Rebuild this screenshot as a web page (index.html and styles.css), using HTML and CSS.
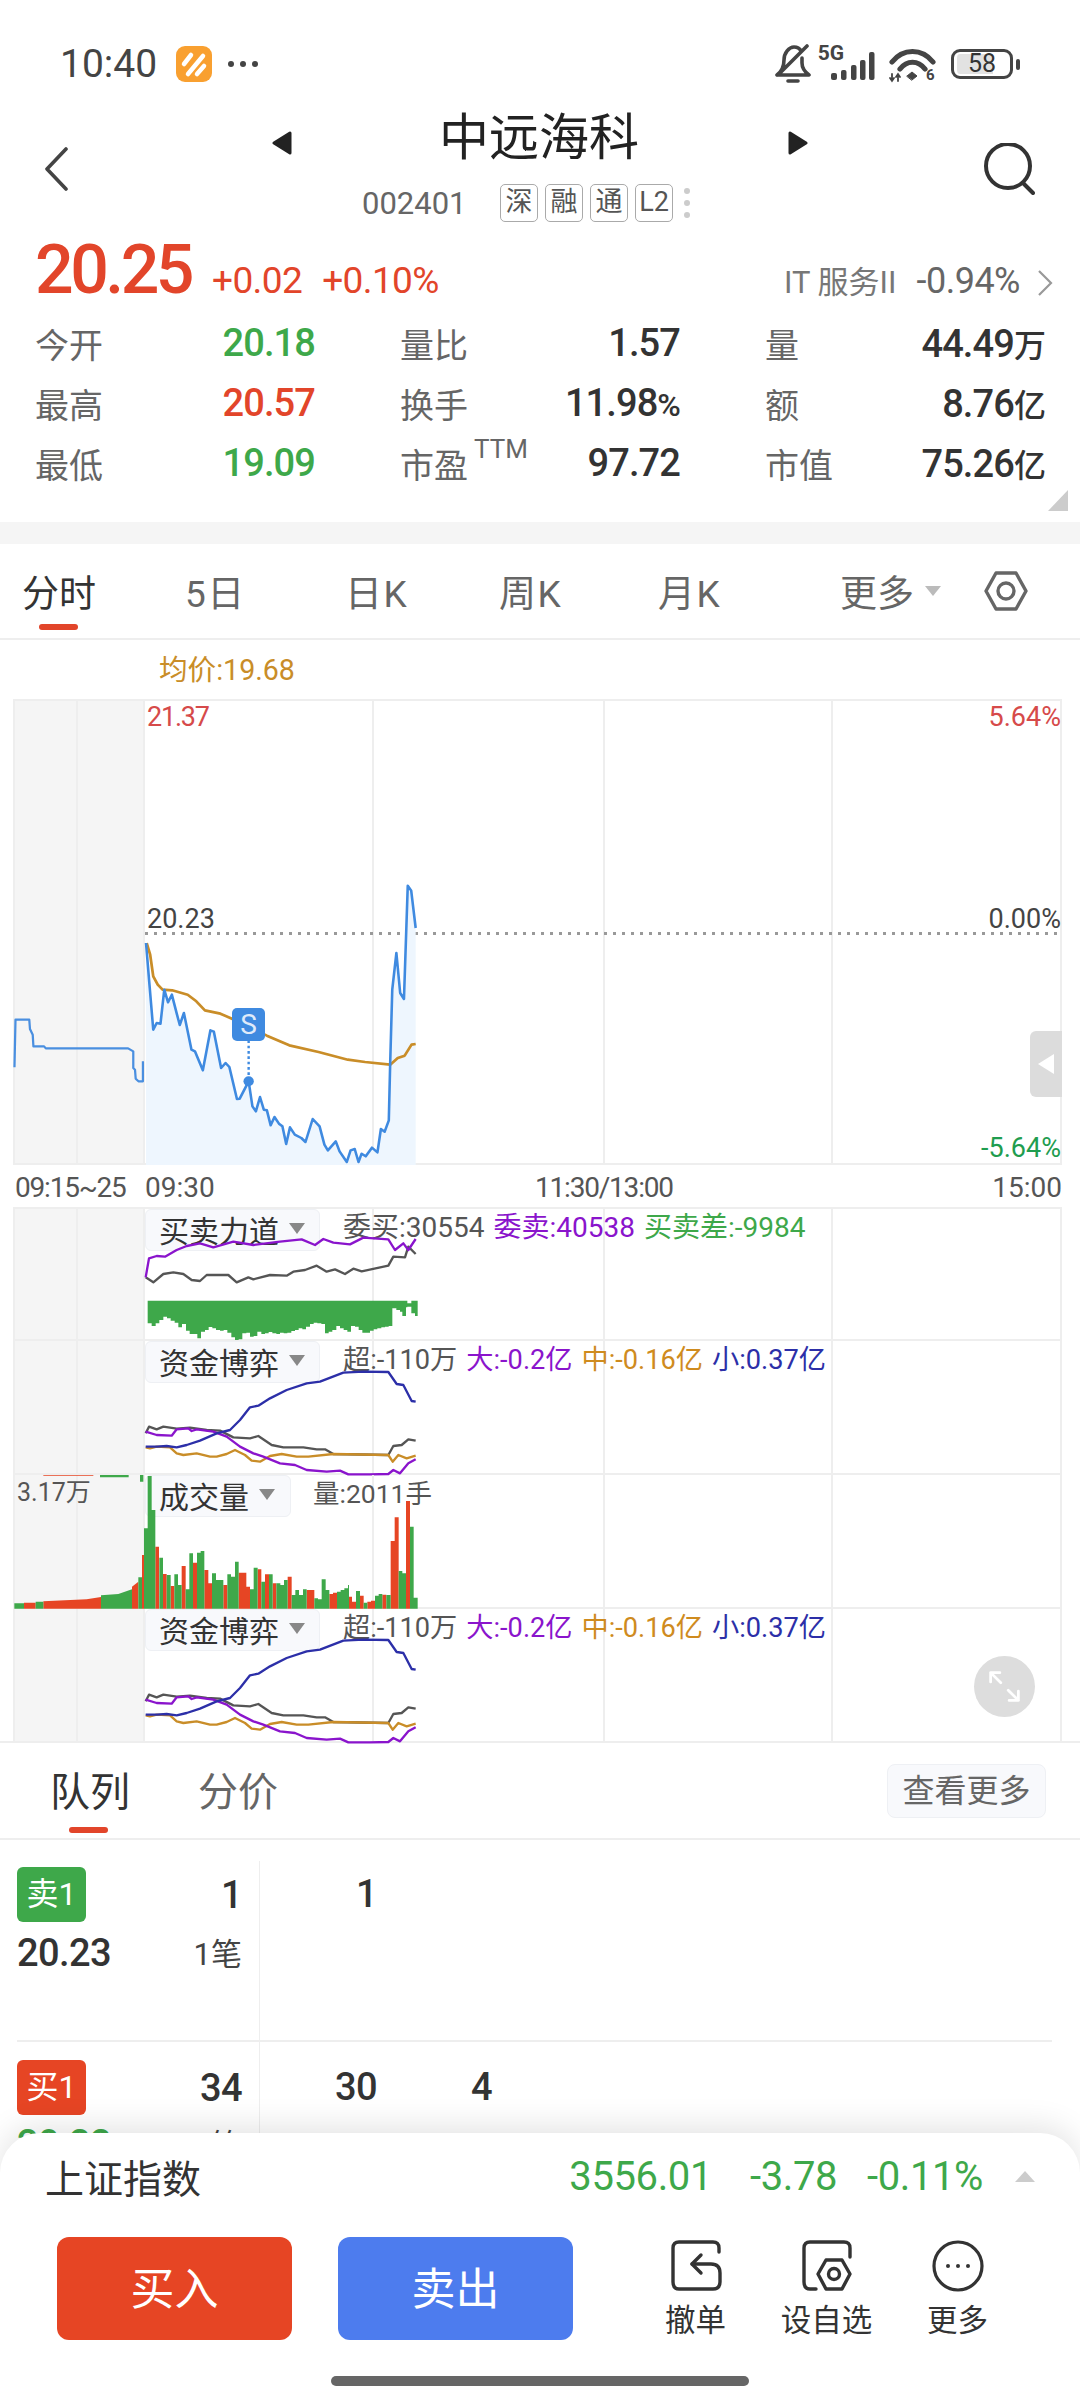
FILE: index.html
```html
<!DOCTYPE html>
<html lang="zh-CN">

<head>
    <meta charset="UTF-8">
    <meta name="viewport" content="width=device-width, initial-scale=1.0">
    <title>中远海科</title>
    <link rel="stylesheet" href="styles.css">
</head>

<body>
    <div class="page">
        <div class="status">
            <span class="status-time">10:40</span>
            <svg class="app-icon" viewBox="0 0 36 36">
                <rect width="36" height="36" rx="9" fill="#f9a030" />
                <path d="M8 18 L15 9 M12 28 L27 10 M21 28 L28 20" stroke="#fff" stroke-width="4.5" stroke-linecap="round" fill="none" />
            </svg>
            <span class="status-dots"><i></i><i></i><i></i></span>
            <div class="status-right">
                <svg class="bell" viewBox="0 0 36 40" fill="none" stroke="#444" stroke-width="3.6" stroke-linecap="round" stroke-linejoin="round">
                    <path d="M2 31 C6 28 9 24 9 16 C9 9 14 3 19 3 C22 3 25 5 26 7 M27 14 V19 C27 25 30 28 34 31 H2 M13 37 H23 M4 30 L32 2" />
                </svg>
                <span class="five-g">5G</span>
                <svg class="signal" viewBox="0 0 44 28" fill="#444">
                    <rect x="0" y="21" width="6" height="7" rx="2" />
                    <rect x="10" y="18" width="5.5" height="10" rx="2" />
                    <rect x="20" y="13" width="5.5" height="15" rx="2" />
                    <rect x="29" y="8" width="5.5" height="20" rx="2" />
                    <rect x="38" y="0" width="5.5" height="28" rx="2" />
                </svg>
                <svg class="wifi" viewBox="0 0 47 38" fill="none" stroke="#444" stroke-width="5.2" stroke-linecap="round">
                    <path d="M3 15 C14 1 33 1 44 15" />
                    <path d="M11 22 C18 13 29 13 36 22" />
                    <path d="M18 29 L23 25 L28 29 L23 33 Z" fill="#444" stroke-width="1" />
                    <path d="M3 27 V34 M1 31 L3 34 L5 31 M9 34 V27 M7 30 L9 27 L11 30" stroke-width="1.8" />
                    <text x="37" y="33" class="wifi-six">6</text>
                </svg>
                <div class="battery">58</div>
                <div class="battery-cap"></div>
            </div>
        </div>

        <div class="nav">
            <svg class="back" viewBox="0 0 24 44" fill="none" stroke="#444" stroke-width="3.6" stroke-linecap="round" stroke-linejoin="round">
                <path d="M22 2 L3 22 L22 42" />
            </svg>
            <div class="nav-center">
                <div class="title-row">
                    <svg class="switch" viewBox="0 0 20 24"><path d="M18 2 V22 L2 12 Z" fill="#222" stroke="#222" stroke-width="3" stroke-linejoin="round" /></svg>
                    <h1 class="title">中远海科</h1>
                    <svg class="switch" viewBox="0 0 20 24"><path d="M2 2 V22 L18 12 Z" fill="#222" stroke="#222" stroke-width="3" stroke-linejoin="round" /></svg>
                </div>
                <div class="code-row">
                    <span class="code">002401</span>
                    <span class="tag">深</span>
                    <span class="tag">融</span>
                    <span class="tag">通</span>
                    <span class="tag">L2</span>
                    <span class="tag-more"><i></i><i></i><i></i></span>
                </div>
            </div>
            <svg class="search" viewBox="0 0 52 52" fill="none" stroke="#333" stroke-width="4" stroke-linecap="round">
                <circle cx="25" cy="23" r="22" />
                <path d="M40 40 L50 50" />
            </svg>
        </div>

        <div class="quote">
            <div class="price-row">
                <span class="price">20.25</span>
                <span class="change">+0.02</span>
                <span class="change">+0.10%</span>
                <span class="sector">IT 服务II</span>
                <span class="sector-change">-0.94%</span>
                <svg class="sector-arrow" viewBox="0 0 16 26" fill="none" stroke="#999" stroke-width="2.2"><path d="M2 1 L14 13 L2 25" /></svg>
            </div>
            <div class="stats">
                <div class="stat"><span>今开</span><b class="green">20.18</b></div>
                <div class="stat"><span>量比</span><b>1.57</b></div>
                <div class="stat"><span>量</span><b>44.49<small>万</small></b></div>
                <div class="stat"><span>最高</span><b class="red">20.57</b></div>
                <div class="stat"><span>换手</span><b>11.98<small>%</small></b></div>
                <div class="stat"><span>额</span><b>8.76<small>亿</small></b></div>
                <div class="stat"><span>最低</span><b class="green">19.09</b></div>
                <div class="stat"><span>市盈<sup>TTM</sup></span><b>97.72</b></div>
                <div class="stat"><span>市值</span><b>75.26<small>亿</small></b></div>
            </div>
            <div class="corner"></div>
        </div>

        <div class="band"></div>

        <div class="tabs">
            <span class="tab active">分时</span>
            <span class="tab">5日</span>
            <span class="tab">日K</span>
            <span class="tab">周K</span>
            <span class="tab">月K</span>
            <span class="tab tab-more">更多<i class="tri-down"></i></span>
            <svg class="hex" viewBox="0 0 44 40" fill="none" stroke="#666" stroke-width="3.4" stroke-linejoin="round">
                <path d="M2 20 L12 2 H32 L42 20 L32 38 H12 Z" />
                <circle cx="22" cy="20" r="8" />
            </svg>
        </div>

        <div class="avg-row">均价:19.68</div>

        <div class="chart">
            <div class="grid-lines"><i class="pre"></i><i class="pre"></i><i></i><i></i><i></i><i></i></div>
            <div class="mid-line"></div>
            <span class="axis-label left top-label red-soft tight">21.37</span>
            <span class="axis-label left mid-label">20.23</span>
            <span class="axis-label left low-label green-soft tight">19.09</span>
            <span class="axis-label right top-label red-soft">5.64%</span>
            <span class="axis-label right mid-label">0.00%</span>
            <span class="axis-label right low-label green-soft">-5.64%</span>
            <svg class="trace" viewBox="0 58 1568 1398" preserveAspectRatio="none" fill="none" stroke-linejoin="round">
                <path fill="#eef6fe" d="M424 1456 L424 790 434 915 445 1050 455 1030 466 1032 477 930 488 968 499 945 514 1005 522 1036 534 1000 556 1110 566 1115 589 1172 611 1052 621 1056 642 1165 655 1150 666 1162 688 1258 696 1257 722 1205 733 1280 743 1295 755 1252 766 1290 775 1292 786 1337 797 1312 810 1332 820 1340 831 1393 842 1343 856 1365 875 1375 887 1387 908 1318 928 1340 942 1395 952 1412 975 1385 986 1415 1007 1447 1018 1412 1030 1408 1041 1447 1050 1422 1062 1430 1080 1404 1096 1418 1106 1348 1117 1356 1129 1322 1133 1150 1139 930 1151 820 1162 940 1173 958 1184 618 1194 633 1207 745 L1207 1456 Z" />
                <path stroke="#4a8fe0" stroke-width="6.5" d="M42 1163 L45 1020 85 1020 87 1048 95 1065 97 1100 128 1100 133 1106 372 1106 387 1115 387 1165 392 1170 394 1197 402 1205 415 1205 415 1145" />
                <path stroke="#c98d28" stroke-width="8" d="M426 790 L436 825 445 890 458 915 472 930 500 932 545 945 570 965 595 992 640 1002 680 1020 775 1068 840 1097 925 1117 1010 1140 1060 1147 1133 1155 1155 1135 1175 1128 1195 1095 1207 1093" />
                <path stroke="#3f8ae0" stroke-width="7.5" d="M424 790 L434 915 445 1050 455 1030 466 1032 477 930 488 968 499 945 514 1005 522 1036 534 1000 556 1110 566 1115 589 1172 611 1052 621 1056 642 1165 655 1150 666 1162 688 1258 696 1257 722 1205 733 1280 743 1295 755 1252 766 1290 775 1292 786 1337 797 1312 810 1332 820 1340 831 1393 842 1343 856 1365 875 1375 887 1387 908 1318 928 1340 942 1395 952 1412 975 1385 986 1415 1007 1447 1018 1412 1030 1408 1041 1447 1050 1422 1062 1430 1080 1404 1096 1418 1106 1348 1117 1356 1129 1322 1133 1150 1139 930 1151 820 1162 940 1173 958 1184 618 1194 633 1207 745" />
                <path stroke="#3f8ae0" stroke-width="7" stroke-dasharray="8 8" d="M722 1082 V1205" />
                <circle cx="722" cy="1205" r="15" fill="#3f8ae0" />
            </svg>
            <span class="marker">S</span>
            <div class="handle"><i></i></div>
        </div>

        <div class="axis">
            <span class="tight">09:15~25</span>
            <span>09:30</span>
            <span class="tight">11:30/13:00</span>
            <span>15:00</span>
        </div>

        <div class="panels">
            <div class="panel">
                <div class="grid-lines"><i class="pre"></i><i class="pre"></i><i></i><i></i><i></i><i></i></div>
                <div class="indicator">买卖力道<i class="tri-down"></i></div>
                <div class="legend">
                    <span>委买:30554</span>
                    <span class="c-purple">委卖:40538</span>
                    <span class="c-green">买卖差:-9984</span>
                </div>
                <svg class="trace" viewBox="0 21 1350 402" fill="none" stroke-width="7" stroke-linejoin="round">
                    <path fill="#3ea84a" d="M443 302 H1222 V320 H1234 V302 H1253 V348 H1245 L1245 340 H1234 V310 H1222 V322 H1218 V348 H1207 V335 H1200 V330 H1189 V325 H1177 V378 H1166 V380 H1155 V382 H1144 V385 H1132 V388 H1121 V392 H1110 V398 H1087 V390 H1076 V380 H1065 V378 H1053 V395 H1042 V390 H1031 V385 H1020 V378 H1009 V390 H997 V395 H986 V400 H975 V372 H964 V370 H952 V368 H941 V372 H930 V380 H918 V388 H907 V385 H896 V390 H885 V393 H874 V398 H862 V400 H851 V398 H840 V402 H829 V400 H817 V396 H806 V400 H795 V402 H784 V395 H772 V408 H761 V410 H750 V398 H739 V400 H727 V418 H716 V420 H705 V412 H694 V398 H682 V390 H671 V392 H660 V390 H648 V385 H637 V381 H626 V390 H615 V395 H603 V415 H592 V402 H580 V402 H569 V392 H558 V372 H546 V382 H535 V368 H524 V362 H512 V355 H501 V350 H490 V360 H478 V370 H467 V378 H455 V370 H443 Z" />
                    <path stroke="#555" d="M437 232 L460 247 490 222 520 217 550 222 575 240 600 243 620 225 685 225 710 247 745 232 760 238 810 225 860 227 880 215 915 210 950 197 980 215 1005 208 1035 222 1060 206 1085 214 1165 197 1180 170 1215 172 1225 140 1247 162" />
                    <path stroke="#8a14cc" d="M437 232 L447 175 470 168 495 170 530 150 560 138 600 130 640 142 700 125 760 135 840 125 905 118 945 135 970 117 1000 128 1050 133 1090 113 1165 118 1185 150 1210 130 1225 150 1247 117" />
                </svg>
            </div>
            <div class="panel">
                <div class="grid-lines"><i class="pre"></i><i class="pre"></i><i></i><i></i><i></i><i></i></div>
                <div class="indicator">资金博弈<i class="tri-down"></i></div>
                <div class="legend legend-flow">
                    <span>超:-110万</span>
                    <span class="c-purple">大:-0.2亿</span>
                    <span class="c-orange">中:-0.16亿</span>
                    <span class="c-navy">小:0.37亿</span>
                </div>
                <svg class="trace" viewBox="0 423 1350 402" fill="none" stroke-width="7" stroke-linejoin="round">
                    <g id="flows">
                        <path stroke="#555" d="M437 700 L447 680 470 688 490 680 530 686 570 683 620 690 660 692 700 712 750 715 775 708 815 735 850 742 910 742 950 748 975 748 1000 762 1165 765 1180 738 1205 735 1225 718 1247 722" />
                        <path stroke="#c98d28" d="M437 742 L450 745 470 740 510 742 530 760 550 765 590 760 630 770 650 770 680 762 705 750 735 765 755 782 780 785 810 768 845 762 890 770 925 770 1000 762 1165 765 1178 785 1195 765 1220 775 1247 767" />
                        <path stroke="#8a14cc" d="M437 695 L470 705 515 707 530 688 565 685 575 693 590 688 640 695 680 710 720 740 760 760 790 770 840 790 885 795 920 810 980 815 1020 812 1045 823 1110 823 1165 822 1180 810 1200 820 1225 790 1247 778" />
                        <path stroke="#2c2fa8" d="M437 740 L470 740 500 738 530 742 560 735 600 722 650 700 690 690 720 660 750 622 775 617 810 595 860 570 920 550 960 545 1030 518 1090 515 1165 516 1190 552 1210 555 1235 603 1247 605" />
                    </g>
                </svg>
            </div>
            <div class="panel">
                <div class="grid-lines"><i class="pre"></i><i class="pre"></i><i></i><i></i><i></i><i></i></div>
                <div class="indicator indicator-short">成交量<i class="tri-down"></i></div>
                <div class="legend legend-vol"><span>量:2011手</span></div>
                <span class="vol-max">3.17万</span>
                <svg class="trace" viewBox="0 45 1350 402">
                    <path fill="#e64524" d="M130 45 H280 V47 H130 Z M72 446 V428 H107 V446 Z M130 446 V424 L260 418 303 411 V446 Z M396 446 V380 L415 365 V446 Z M426 446 V285 H432 V446 Z M466 446 V260 H477 V446 Z M489 446 V342 H500 V446 Z M512 446 V378 H523 V446 Z M545 446 V318 H557 V446 Z M579 446 V308 H591 V446 Z M613 446 V330 H625 V370 H636 V446 Z M670 446 V375 H682 V446 Z M716 446 V338 H739 V380 H750 V446 Z M773 446 V328 H784 V446 Z M795 446 V343 H807 V446 Z M818 446 V370 H829 V446 Z M863 446 V350 H875 V446 Z M920 446 V390 H943 V446 Z M988 446 V402 H999 V398 H1011 V446 Z M1047 446 V410 H1056 V425 H1068 V446 Z M1080 446 V407 H1091 V446 Z M1102 446 V425 H1113 V422 H1125 V446 Z M1147 446 V404 H1159 V446 Z M1172 446 V243 H1184 V172 H1196 V446 Z M1218 446 V123 H1230 V446 Z" />
                    <path fill="#3ea84a" d="M300 45 H386 V52 H300 Z M420 45 H430 V65 H420 Z M43 446 V430 H72 V446 Z M107 446 V425 H130 V446 Z M303 446 V406 L355 402 396 388 V446 Z M415 446 V352 H426 V446 Z M432 446 V205 H443 V48 H455 V150 H466 V446 Z M478 446 V293 H489 V446 Z M500 446 V345 H512 V446 Z M523 446 V343 H534 V375 H545 V446 Z M557 446 V388 H568 V280 H579 V446 Z M591 446 V278 H602 V273 H613 V446 Z M636 446 V340 H648 V360 H670 V446 Z M682 446 V343 H693 V350 H705 V305 H716 V446 Z M750 446 V388 H761 V323 H773 V446 Z M784 446 V365 H795 V446 Z M807 446 V343 H818 V446 Z M829 446 V370 H841 V375 H852 V360 H863 V446 Z M875 446 V405 H886 V390 H897 V405 H909 V388 H920 V446 Z M943 446 V415 H954 V418 H965 V358 H977 V390 H988 V446 Z M1011 446 V395 H1022 V390 H1033 V385 H1044 V375 H1047 V446 Z M1068 446 V393 H1080 V446 Z M1091 446 V428 H1102 V446 Z M1125 446 V407 H1136 V402 H1147 V446 Z M1159 446 V405 H1172 V446 Z M1196 446 V333 H1207 V340 H1218 V446 Z M1230 446 V200 H1241 V413 H1253 V446 Z" />
                </svg>
            </div>
            <div class="panel">
                <div class="grid-lines"><i class="pre"></i><i class="pre"></i><i></i><i></i><i></i><i></i></div>
                <div class="indicator">资金博弈<i class="tri-down"></i></div>
                <div class="legend legend-flow">
                    <span>超:-110万</span>
                    <span class="c-purple">大:-0.2亿</span>
                    <span class="c-orange">中:-0.16亿</span>
                    <span class="c-navy">小:0.37亿</span>
                </div>
                <svg class="trace" viewBox="0 423 1350 402" fill="none" stroke-width="7" stroke-linejoin="round">
                    <use href="#flows" />
                </svg>
                <button class="expand">
                    <svg viewBox="0 0 40 40" fill="none" stroke="#fff" stroke-width="3" stroke-linecap="round" stroke-linejoin="round">
                        <path d="M5 5 L16 16 M5 15 V5 H15 M35 35 L24 24 M35 25 V35 H25" />
                    </svg>
                </button>
            </div>
        </div>

        <div class="book-tabs">
            <span class="book-tab active">队列</span>
            <span class="book-tab">分价</span>
            <span class="see-more">查看更多</span>
        </div>

        <div class="book">
            <div class="book-row">
                <div class="level">
                    <div class="level-line">
                        <span class="badge badge-sell">卖1</span>
                        <b>1</b>
                    </div>
                    <div class="level-line level-price">
                        <b>20.23</b>
                        <span>1笔</span>
                    </div>
                </div>
                <div class="orders"><b>1</b></div>
            </div>
            <div class="book-row">
                <div class="level">
                    <div class="level-line">
                        <span class="badge badge-buy">买1</span>
                        <b>34</b>
                    </div>
                    <div class="level-line level-price">
                        <b class="green">20.22</b>
                        <span>1笔</span>
                    </div>
                </div>
                <div class="orders"><b>30</b><b>4</b></div>
            </div>
        </div>

        <div class="sheet">
            <div class="index-row">
                <span class="index-name">上证指数</span>
                <span class="index-nums">
                    <span class="index-last">3556.01</span>
                    <span>-3.78</span>
                    <span>-0.11%</span>
                </span>
                <i class="tri-up"></i>
            </div>
            <div class="actions">
                <button class="trade trade-buy">买入</button>
                <button class="trade trade-sell">卖出</button>
                <div class="tool">
                    <svg viewBox="0 0 52 52" fill="none" stroke="#333" stroke-width="3.4" stroke-linecap="round" stroke-linejoin="round">
                        <path d="M49 12 V8 Q49 2 43 2 H9 Q3 2 3 8 V42 Q3 49 9 49 H43 Q50 49 50 42 V33 Q50 24 41 24 H22" />
                        <path d="M31 15 L22 24 L31 33" />
                    </svg>
                    <span>撤单</span>
                </div>
                <div class="tool">
                    <svg viewBox="0 0 52 52" fill="none" stroke="#333" stroke-width="3.4" stroke-linecap="round" stroke-linejoin="round">
                        <path d="M49 17 V8 Q49 2 43 2 H9 Q3 2 3 8 V42 Q3 49 9 49 H15" />
                        <path d="M17 34 L25 20 H41 L49 34 L41 49 H25 Z" />
                        <circle cx="33" cy="34" r="5.5" />
                    </svg>
                    <span>设自选</span>
                </div>
                <div class="tool">
                    <svg viewBox="0 0 52 52" fill="none" stroke="#333" stroke-width="3.2">
                        <circle cx="26" cy="26" r="24" />
                        <circle cx="16" cy="26" r="2" fill="#333" stroke="none" />
                        <circle cx="26" cy="26" r="2" fill="#333" stroke="none" />
                        <circle cx="36" cy="26" r="2" fill="#333" stroke="none" />
                    </svg>
                    <span>更多</span>
                </div>
            </div>
            <div class="home-bar"></div>
        </div>
    </div>
</body>

</html>
```

FILE: styles.css
```css
* {
    box-sizing: border-box;
}

body {
    margin: 0;
    background: #fff;
    font-family: Roboto, "Noto Sans CJK SC", sans-serif;
    color: #333;
}

i {
    display: block;
    font-style: normal;
}

.page {
    position: relative;
    width: 1080px;
    height: 2400px;
    overflow: hidden;
}

.red {
    color: #e2452a;
}

.green {
    color: #3ea84a;
}

.tight {
    letter-spacing: -1.2px;
}

/* status bar */
.status {
    display: flex;
    align-items: center;
    height: 100px;
    padding: 28px 60px 0;
}

.status-time {
    font-size: 39px;
    color: #444;
    width: 116px;
}

.app-icon {
    width: 36px;
    height: 36px;
}

.status-dots {
    display: flex;
    gap: 6px;
    margin-left: 16px;
}

.status-dots i {
    width: 6px;
    height: 6px;
    border-radius: 50%;
    background: #444;
}

.status-right {
    display: flex;
    align-items: center;
    margin-left: auto;
}

.bell {
    width: 36px;
    height: 40px;
}

.five-g {
    font-size: 21px;
    font-weight: 700;
    color: #444;
    line-height: 16px;
    align-self: flex-start;
    margin: 2px 0 0 7px;
}

.signal {
    width: 44px;
    height: 28px;
    margin: 0 0 -4px -13px;
}

.wifi {
    width: 47px;
    height: 38px;
    margin: 4px 0 0 14px;
}

.wifi-six {
    font-size: 15px;
    font-weight: 700;
    fill: #444;
    stroke: none;
}

.battery {
    width: 62px;
    height: 30px;
    margin-left: 15px;
    border: 3px solid #444;
    border-radius: 9px;
    padding: 2px 3px;
    background: linear-gradient(90deg, #e2e2e2 72%, transparent 72%) content-box;
    font-size: 25px;
    line-height: 20px;
    text-align: center;
    color: #333;
}

.battery-cap {
    width: 4px;
    height: 11px;
    margin-left: 3px;
    border-radius: 2px;
    background: #444;
}

/* stock title */
.nav {
    display: flex;
    align-items: flex-start;
    height: 128px;
    padding-left: 44px;
}

.back {
    width: 24px;
    height: 44px;
    margin-top: 47px;
}

.nav-center {
    width: 536px;
    margin: 6px 175px 0 204px;
}

.title-row {
    display: flex;
    align-items: center;
    justify-content: space-between;
    height: 62px;
}

.switch {
    width: 20px;
    height: 24px;
    margin-top: 12px;
}

.title {
    margin: 2px 0 0 -2px;
    font-size: 50px;
    font-weight: 400;
    line-height: 62px;
    color: #222;
}

.code-row {
    display: flex;
    align-items: center;
    gap: 7px;
    height: 40px;
    margin-top: 15px;
    padding-left: 90px;
}

.code {
    width: 124px;
    margin-right: 7px;
    font-size: 31px;
    color: #666;
}

.tag {
    width: 38px;
    height: 38px;
    border: 1px solid #aaa;
    border-radius: 5px;
    font-size: 27px;
    line-height: 35px;
    text-align: center;
    color: #555;
}

.tag-more {
    display: flex;
    flex-direction: column;
    gap: 6px;
    margin-left: 4px;
}

.tag-more i {
    width: 6px;
    height: 6px;
    border-radius: 50%;
    background: #ccc;
}

.search {
    width: 52px;
    height: 52px;
    margin-top: 43px;
}

/* quote */
.quote {
    position: relative;
    height: 294px;
    padding: 0 35px;
}

.price-row {
    display: flex;
    align-items: baseline;
    height: 85px;
}

.price {
    font-size: 68px;
    font-weight: 500;
    line-height: 85px;
    letter-spacing: -3.5px;
    color: #e2452a;
    margin-right: 21px;
}

.change {
    font-size: 37px;
    letter-spacing: -0.6px;
    color: #e2452a;
    margin-right: 20px;
}

.sector {
    margin-left: auto;
    font-size: 31px;
    color: #777;
}

.sector-change {
    margin-left: 20px;
    font-size: 36px;
    letter-spacing: -0.5px;
    color: #666;
}

.sector-arrow {
    width: 16px;
    height: 26px;
    margin: 24px -8px 0 17px;
    align-self: center;
}

.stats {
    display: grid;
    grid-template-columns: repeat(3, 280px);
    grid-auto-rows: 60px;
    column-gap: 85px;
}

.stat {
    display: flex;
    align-items: center;
    justify-content: space-between;
}

.stat span {
    font-size: 34px;
    color: #666;
}

.stat b {
    font-size: 38px;
    font-weight: 500;
    letter-spacing: -0.9px;
}

.stat small {
    font-size: 32px;
    font-weight: 500;
}

.stat sup {
    font-size: 26px;
    line-height: 0;
    margin-left: 6px;
    vertical-align: 20px;
}

.corner {
    position: absolute;
    right: 12px;
    bottom: 11px;
    width: 0;
    height: 0;
    border-style: solid;
    border-width: 0 0 21px 20px;
    border-color: transparent transparent #ccc transparent;
}

.band {
    height: 22px;
    background: #f5f5f5;
}

/* period tabs */
.tabs {
    display: grid;
    grid-template-columns: 163px 160px 154px 159px 182px 144px auto;
    align-items: center;
    height: 96px;
    padding: 0 0 0 22px;
    border-bottom: 2px solid #eee;
}

.tab {
    position: relative;
    font-size: 37px;
    letter-spacing: 1.5px;
    color: #666;
}

.tab.active {
    color: #333;
    letter-spacing: 0;
}

.tab.active::after {
    content: "";
    position: absolute;
    left: 17px;
    bottom: -12px;
    width: 39px;
    height: 6px;
    border-radius: 3px;
    background: #e2452a;
}

.tab-more {
    display: flex;
    align-items: center;
    gap: 11px;
    letter-spacing: 0;
}

.tri-down {
    width: 0;
    height: 0;
    border-style: solid;
    border-width: 10px 8px 0;
    border-color: #bbb transparent transparent;
}

.hex {
    width: 44px;
    height: 40px;
}

.avg-row {
    height: 59px;
    padding: 10px 0 0 159px;
    font-size: 28.6px;
    line-height: 40px;
    color: #c98d28;
}

/* charts */
.chart {
    position: relative;
    height: 466px;
    margin: 0 18px 0 13px;
    border-top: 2px solid #eee;
    border-bottom: 2px solid #eee;
}

.grid-lines {
    position: absolute;
    inset: 0;
    display: grid;
    grid-template-columns: 65px 67px 229px 231px 228px 229px;
}

.grid-lines i {
    border-right: 2px solid #eee;
}

.grid-lines i:first-child {
    border-left: 2px solid #eee;
}

.grid-lines .pre {
    background: #f5f5f5;
}

.mid-line {
    position: absolute;
    top: 231px;
    left: 132px;
    right: 0;
    height: 3px;
    background: repeating-linear-gradient(90deg, #999 0 3px, transparent 3px 9px);
}

.axis-label {
    position: absolute;
    font-size: 27px;
    line-height: 30px;
    color: #444;
}

.axis-label.left {
    left: 134px;
}

.axis-label.right {
    right: 1px;
}

.top-label {
    top: 1px;
}

.mid-label {
    top: 203px;
}

.low-label {
    top: 432px;
}

.red-soft {
    color: #d64a4a;
}

.green-soft {
    color: #1f9d4f;
}

.trace {
    position: absolute;
    top: -2px;
    left: -13px;
    width: 540px;
    height: 466px;
    overflow: visible;
}

.panel .trace {
    top: 0;
    width: 450px;
    height: 134px;
}

.panel:first-child .trace {
    top: -2px;
}

.marker {
    position: absolute;
    left: 219px;
    top: 307px;
    width: 33px;
    height: 33px;
    border-radius: 5px;
    background: #3f8ae0;
    font-size: 28px;
    line-height: 33px;
    text-align: center;
    color: #dfeafa;
}

.handle {
    position: absolute;
    right: 0;
    top: 330px;
    display: flex;
    align-items: center;
    justify-content: center;
    width: 32px;
    height: 66px;
    border-radius: 6px 0 0 6px;
    background: #dcdcdc;
}

.handle i {
    width: 0;
    height: 0;
    border-style: solid;
    border-width: 10px 16px 10px 0;
    border-color: transparent #fff transparent transparent;
}

.axis {
    display: grid;
    grid-template-columns: 130px 390px 1fr auto;
    align-items: center;
    height: 42px;
    padding: 2px 18px 0 15px;
    font-size: 28px;
    color: #555;
}

.panels {
    margin: 0 18px 0 13px;
    border-top: 2px solid #eee;
}

.panel {
    position: relative;
    height: 134px;
    border-bottom: 2px solid #eee;
}

.panel:first-child {
    height: 132px;
}

.indicator {
    position: absolute;
    top: 0;
    left: 132px;
    display: flex;
    align-items: center;
    gap: 10px;
    width: 175px;
    height: 42px;
    padding: 0 0 3px 13px;
    background: #f8f9fc;
    border: 1px solid #eef0f4;
    border-radius: 6px;
    font-size: 30px;
    color: #333;
}

.indicator .tri-down {
    border-width: 11px 8px 0;
    border-color: #888 transparent transparent;
}

.indicator-short {
    width: 146px;
}

.legend {
    position: absolute;
    top: 1px;
    left: 330px;
    display: flex;
    gap: 9px;
    font-size: 28px;
    line-height: 36px;
    color: #555;
}

.legend-flow {
    font-size: 27.2px;
}

.legend-vol {
    left: 300px;
    font-size: 26.5px;
}

.c-purple {
    color: #8a14cc;
}

.c-green {
    color: #3ea84a;
}

.c-orange {
    color: #cf8b1e;
}

.c-navy {
    color: #2c2fa8;
}

.vol-max {
    position: absolute;
    top: 2px;
    left: 4px;
    font-size: 25px;
    line-height: 32px;
    color: #555;
}

.expand {
    position: absolute;
    right: 27px;
    top: 47px;
    width: 61px;
    height: 61px;
    padding: 12px;
    border: 0;
    border-radius: 50%;
    background: #ddd;
}

.expand svg {
    display: block;
}

/* order book */
.book-tabs {
    display: flex;
    align-items: center;
    height: 99px;
    margin-top: -2px;
    padding: 0 34px 4px 50px;
    border-top: 2px solid #eee;
    border-bottom: 2px solid #eee;
}

.book-tab {
    position: relative;
    margin-right: 68px;
    font-size: 40px;
    color: #666;
}

.book-tab.active {
    color: #333;
}

.book-tab.active::after {
    content: "";
    position: absolute;
    left: 19px;
    bottom: -15px;
    width: 39px;
    height: 6px;
    border-radius: 3px;
    background: #e2452a;
}

.see-more {
    width: 159px;
    height: 54px;
    margin: 4px 0 0 auto;
    border: 1px solid #eef0f4;
    border-radius: 8px;
    background: #f8f9fc;
    font-size: 32px;
    line-height: 52px;
    text-align: center;
    color: #666;
}

.book {
    padding: 21px 28px 0 17px;
}

.book-row {
    display: flex;
    height: 181px;
    border-bottom: 2px solid #eee;
}

.book-row + .book-row {
    height: 200px;
    padding-top: 12px;
    border-bottom: 0;
}

.level {
    width: 243px;
    padding: 6px 17px 0 0;
    border-right: 1px solid #eee;
}

.book-row + .book-row .level {
    margin-top: -12px;
    padding-top: 18px;
}

.book-row + .book-row .level-price {
    margin-top: 7px;
}

.level-line {
    display: flex;
    align-items: center;
    justify-content: space-between;
}

.level-line b,
.orders b {
    font-size: 38px;
    font-weight: 500;
    letter-spacing: -0.6px;
    color: #333;
}

.level-line b.green {
    color: #3ea84a;
}

.level-price {
    height: 44px;
    margin-top: 9px;
}

.level-price span {
    margin-bottom: 3px;
    font-size: 31px;
    color: #444;
}

.badge {
    width: 69px;
    height: 55px;
    border-radius: 6px;
    font-size: 32px;
    line-height: 55px;
    text-align: center;
    color: #fff;
}

.badge-sell {
    background: #3ea84a;
}

.badge-buy {
    background: #e64524;
}

.orders {
    display: grid;
    grid-template-columns: repeat(2, 115px);
    justify-items: end;
    align-content: start;
    height: 50px;
    padding: 11px 0 0 2px;
}

/* bottom sheet */
.sheet {
    position: absolute;
    left: 0;
    right: 0;
    bottom: 0;
    height: 267px;
    border-radius: 40px 40px 0 0;
    background: #fff;
    box-shadow: 0 -8px 30px rgba(0, 0, 0, 0.1);
}

.index-row {
    display: flex;
    align-items: center;
    height: 86px;
    padding: 0 45px 0 45px;
}

.index-name {
    font-size: 39px;
    color: #333;
}

.index-nums {
    display: flex;
    gap: 30px;
    margin-left: auto;
    font-size: 40px;
    letter-spacing: -0.4px;
    color: #3ea84a;
}

.index-last {
    margin-right: 8px;
}

.tri-up {
    width: 0;
    height: 0;
    margin-left: 32px;
    border-style: solid;
    border-width: 0 10px 11px;
    border-color: transparent transparent #ccc;
}

.actions {
    display: flex;
    align-items: flex-start;
    margin-top: 18px;
    padding-left: 57px;
}

.trade {
    width: 235px;
    height: 103px;
    margin-right: 46px;
    padding-bottom: 6px;
    border: 0;
    border-radius: 12px;
    font-family: inherit;
    font-size: 44px;
    color: #fff;
}

.trade-buy {
    background: #e64524;
}

.trade-sell {
    margin-right: 57px;
    background: #4d7cee;
}

.tool {
    display: flex;
    flex-direction: column;
    align-items: center;
    width: 131px;
    font-size: 30.5px;
    color: #333;
}

.tool svg {
    width: 52px;
    height: 52px;
    margin-top: 3px;
}

.tool span {
    margin-top: 7px;
    line-height: 44px;
}

.home-bar {
    width: 418px;
    height: 10px;
    margin: 33px auto 0;
    border-radius: 5px;
    background: #666;
}
```
